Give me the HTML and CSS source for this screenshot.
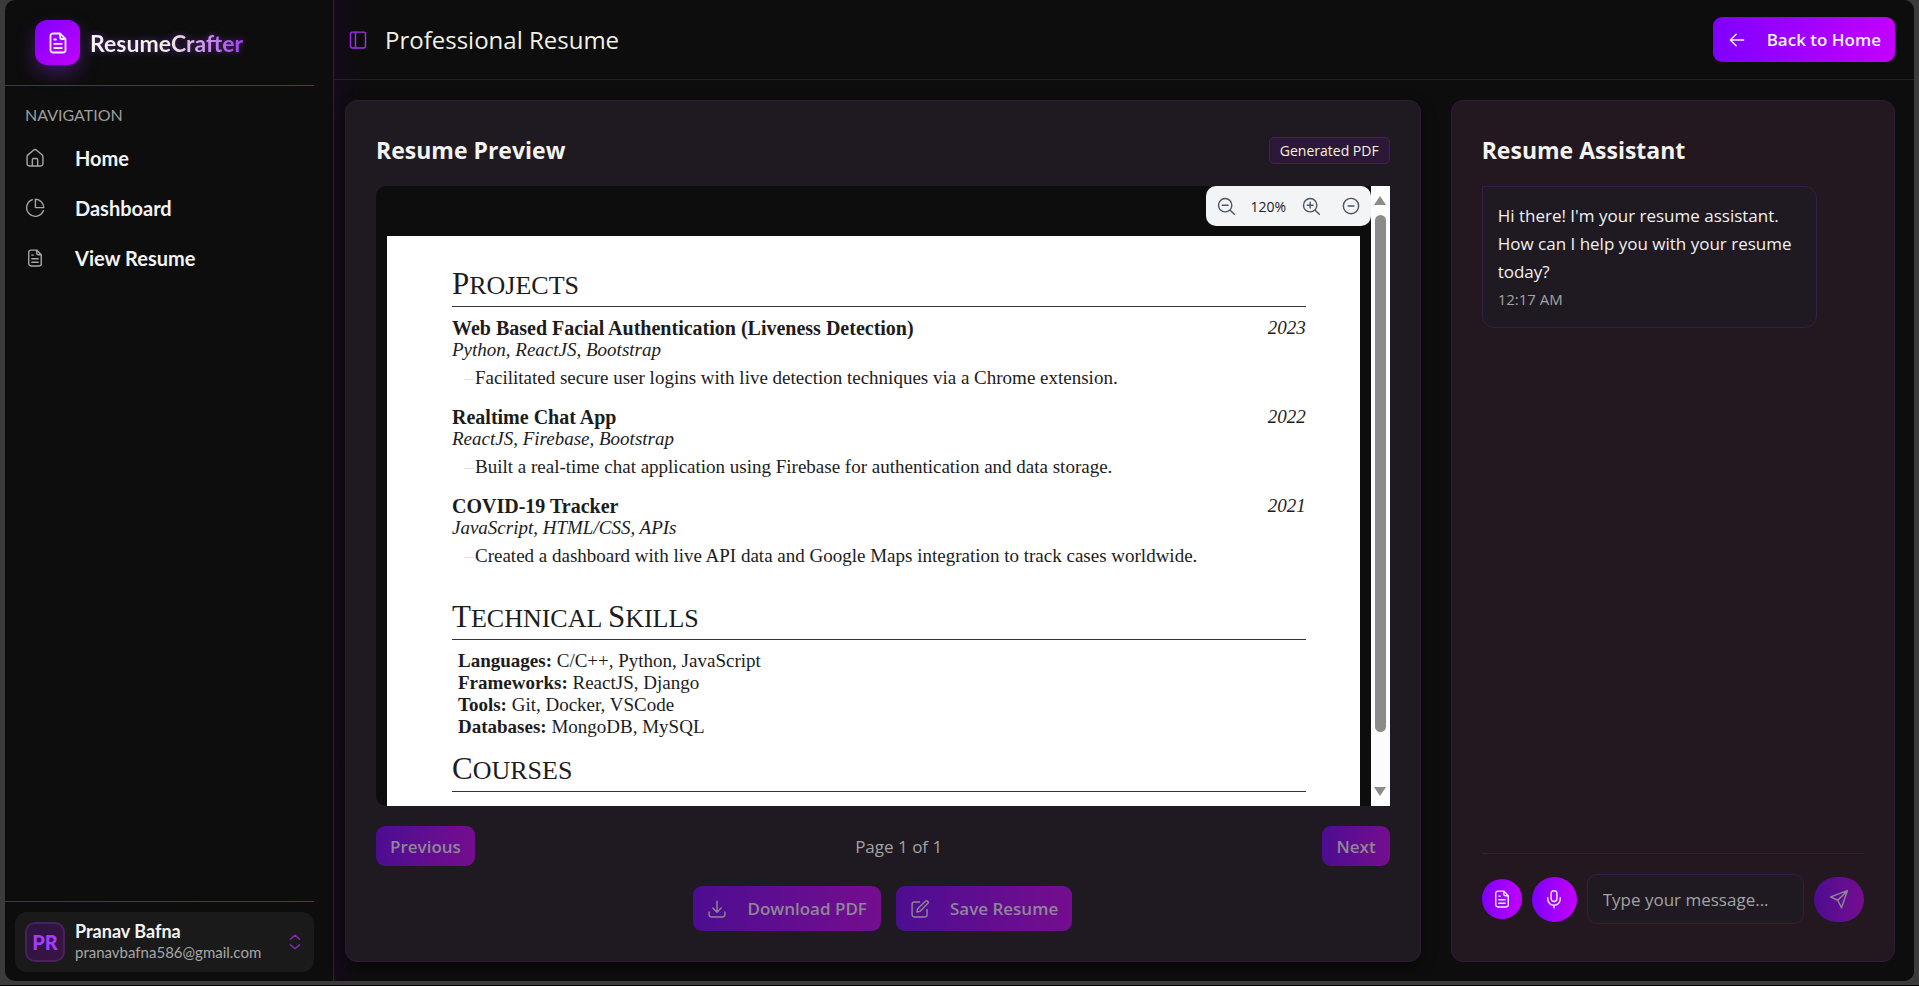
FILE: index.html
```html
<!DOCTYPE html>
<html lang="en">
<head>
<meta charset="utf-8">
<meta name="viewport" content="width=device-width, initial-scale=1">
<title>ResumeCrafter</title>
<link rel="stylesheet" href="styles.css">
</head>
<body>
<svg width="0" height="0" class="sprite" aria-hidden="true">
  <symbol id="i-file" viewBox="0 0 24 24"><path d="M14 2.500H7a2.500 2.500 0 0 0-2.500 2.500v14A2.500 2.500 0 0 0 7 21.500h10a2.500 2.500 0 0 0 2.500-2.500V8z M14 2.500V6a2 2 0 0 0 2 2h3.500 M8.200 8.500h1.800 M8.200 12.800h7.600 M8.200 17h7.600"/></symbol>
  <symbol id="i-home" viewBox="0 0 24 24"><path d="M2.500 10.500a3 3 0 0 1 1.100-2.300l6.500-5.500a3 3 0 0 1 3.800 0l6.500 5.500a3 3 0 0 1 1.100 2.300V19a2.500 2.500 0 0 1-2.500 2.500H5A2.500 2.500 0 0 1 2.500 19z M8.800 21.500V14a1.500 1.500 0 0 1 1.500-1.500h3.400a1.500 1.500 0 0 1 1.500 1.500v7.500"/></symbol>
  <symbol id="i-pie" viewBox="0 0 24 24"><path d="M8.800 2a10.300 10.300 0 1 0 13.200 13.200 M12.500 1.500v10h10a10 10 0 0 0-10-10z"/></symbol>
  <symbol id="i-panel" viewBox="0 0 24 24"><rect x="3" y="2.500" width="18" height="19" rx="2"/><path d="M9 2.500v19"/></symbol>
  <symbol id="i-back" viewBox="0 0 24 24"><path d="M20 12H4.500M11 5l-7 7 7 7"/></symbol>
  <symbol id="i-updown" viewBox="0 0 24 24"><path d="M5 8l7-6 7 6M5 16l7 6 7-6"/></symbol>
  <symbol id="i-zoomout" viewBox="0 0 24 24"><circle cx="11" cy="11" r="8"/><path d="M17 17l5 5M7.500 11h7"/></symbol>
  <symbol id="i-zoomin" viewBox="0 0 24 24"><circle cx="11" cy="11" r="8"/><path d="M17 17l5 5M7.500 11h7M11 7.500v7"/></symbol>
  <symbol id="i-minus" viewBox="0 0 24 24"><circle cx="12" cy="12" r="9.200"/><path d="M8.500 12h7"/></symbol>
  <symbol id="i-download" viewBox="0 0 24 24"><path d="M12 2.500v13M7 10.800l5 5 5-5M2.500 15.500v3.500a2.500 2.500 0 0 0 2.500 2.500h14a2.500 2.500 0 0 0 2.500-2.500v-3.500"/></symbol>
  <symbol id="i-edit" viewBox="0 0 24 24"><path d="M11.500 3.500H5A2.500 2.500 0 0 0 2.500 6v13A2.500 2.500 0 0 0 5 21.500h13a2.500 2.500 0 0 0 2.500-2.500v-6.500M8.300 15.700l.9-4 9.300-9a1.900 1.900 0 0 1 2.800 2.800l-9.200 9.300z"/></symbol>
  <symbol id="i-mic" viewBox="0 0 24 24"><rect x="8.500" y="2" width="7" height="13" rx="3.500"/><path d="M4.500 10.500v1.500a7.500 7.500 0 0 0 15 0v-1.500M12 19.500v3"/></symbol>
  <symbol id="i-send" viewBox="0 0 24 24"><path d="M22 2L2 9.500l8.500 4L15 22.500zM22 2L10.500 13.500"/></symbol>
</svg>
<div class="window">
  <aside class="sidebar">
    <div class="brand">
      <span class="brand-mark"><svg class="icon"><use href="#i-file"/></svg></span>
      <span class="brand-name">ResumeCrafter</span>
    </div>
    <nav class="nav" aria-labelledby="nav-title">
      <div class="nav-title" id="nav-title">NAVIGATION</div>
      <a class="nav-link" href="#home"><svg class="icon"><use href="#i-home"/></svg>Home</a>
      <a class="nav-link" href="#dashboard"><svg class="icon"><use href="#i-pie"/></svg>Dashboard</a>
      <a class="nav-link" href="#resume"><svg class="icon"><use href="#i-file"/></svg>View Resume</a>
    </nav>
    <div class="account">
      <button class="user" type="button">
        <span class="avatar">PR</span>
        <span class="user-text"><span class="user-name">Pranav Bafna</span><span class="user-mail">pranavbafna586@gmail.com</span></span>
        <svg class="icon user-toggle"><use href="#i-updown"/></svg>
      </button>
    </div>
  </aside>
  <div class="main">
    <header class="topbar">
      <button class="panel-toggle" type="button" aria-label="Toggle sidebar"><svg class="icon"><use href="#i-panel"/></svg></button>
      <h1 class="page-title">Professional Resume</h1>
      <button class="btn btn-wide" type="button"><svg class="icon"><use href="#i-back"/></svg>Back to Home</button>
    </header>
    <main class="content">
      <section class="card card-preview">
        <div class="card-head"><h2 class="card-title">Resume Preview</h2><span class="badge">Generated PDF</span></div>
        <div class="viewer">
          <div class="viewport">
            <article class="sheet">
              <h3 class="sheet-heading"><span class="cap">P</span>ROJECTS</h3>
              <div class="project">
                <div class="project-row"><strong>Web Based Facial Authentication (Liveness Detection)</strong><em>2023</em></div>
                <em>Python, ReactJS, Bootstrap</em>
                <p class="point"><span class="dash">–</span>Facilitated secure user logins with live detection techniques via a Chrome extension.</p>
              </div>
              <div class="project">
                <div class="project-row"><strong>Realtime Chat App</strong><em>2022</em></div>
                <em>ReactJS, Firebase, Bootstrap</em>
                <p class="point"><span class="dash">–</span>Built a real-time chat application using Firebase for authentication and data storage.</p>
              </div>
              <div class="project">
                <div class="project-row"><strong>COVID-19 Tracker</strong><em>2021</em></div>
                <em>JavaScript, HTML/CSS, APIs</em>
                <p class="point"><span class="dash">–</span>Created a dashboard with live API data and Google Maps integration to track cases worldwide.</p>
              </div>
              <h3 class="sheet-heading heading-skills"><span class="cap">T</span>ECHNICAL <span class="cap">S</span>KILLS</h3>
              <ul class="skills">
                <li><strong>Languages:</strong> C/C++, Python, JavaScript</li>
                <li><strong>Frameworks:</strong> ReactJS, Django</li>
                <li><strong>Tools:</strong> Git, Docker, VSCode</li>
                <li><strong>Databases:</strong> MongoDB, MySQL</li>
              </ul>
              <h3 class="sheet-heading"><span class="cap">C</span>OURSES</h3>
            </article>
          </div>
          <div class="scrollbar" aria-hidden="true"><span class="arrow-up"></span><span class="track"><span class="thumb"></span></span><span class="arrow-down"></span></div>
          <div class="zoom-bar">
            <button type="button" class="zoom-btn" aria-label="Zoom out"><svg class="icon"><use href="#i-zoomout"/></svg></button>
            <span class="zoom-value">120%</span>
            <button type="button" class="zoom-btn" aria-label="Zoom in"><svg class="icon"><use href="#i-zoomin"/></svg></button>
            <button type="button" class="zoom-btn zoom-reset" aria-label="Reset zoom"><svg class="icon"><use href="#i-minus"/></svg></button>
          </div>
        </div>
        <div class="pager">
          <button class="btn" type="button" disabled>Previous</button>
          <span class="page-count">Page 1 of 1</span>
          <button class="btn" type="button" disabled>Next</button>
        </div>
        <div class="actions">
          <button class="btn btn-wide" type="button" disabled><svg class="icon"><use href="#i-download"/></svg>Download PDF</button>
          <button class="btn btn-wide" type="button" disabled><svg class="icon"><use href="#i-edit"/></svg>Save Resume</button>
        </div>
      </section>
      <section class="card card-chat">
        <div class="card-head"><h2 class="card-title">Resume Assistant</h2></div>
        <div class="messages">
          <div class="bubble"><p>Hi there! I'm your resume assistant. How can I help you with your resume today?</p><time>12:17 AM</time></div>
        </div>
        <form class="composer">
          <button class="round round-small" type="button" aria-label="Attach resume"><svg class="icon"><use href="#i-file"/></svg></button>
          <button class="round" type="button" aria-label="Record"><svg class="icon"><use href="#i-mic"/></svg></button>
          <input class="message-input" type="text" placeholder="Type your message..." aria-label="Message">
          <button class="round round-send" type="submit" disabled aria-label="Send"><svg class="icon"><use href="#i-send"/></svg></button>
        </form>
      </section>
    </main>
  </div>
</div>
</body>
</html>
```
FILE: styles.css
```css
* { box-sizing: border-box; }
body {
  margin: 0;
  min-height: 100vh;
  display: flex;
  padding: 0 5px 4px;
  background: #3b3b3b;
  border-bottom: 1px solid #000;
  font-family: "Open Sans", "Noto Sans", sans-serif;
  font-size: 16px;
  color: #f1f1f1;
}
h1, h2, h3, p, ul { margin: 0; padding: 0; }
button, input { font: inherit; color: inherit; border: 0; margin: 0; }
.sprite { position: absolute; }
.icon {
  width: 20px;
  height: 20px;
  flex: none;
  fill: none;
  stroke: currentColor;
  stroke-width: 1.7;
  stroke-linecap: round;
  stroke-linejoin: round;
}
.window {
  flex: 1;
  display: grid;
  grid-template-columns: 329px minmax(0, 1fr);
  background: #0d0d0d;
  border-radius: 10px;
  overflow: hidden;
}

.sidebar {
  display: flex;
  flex-direction: column;
  padding-right: 19px;
  border-right: 1px solid #3c1552;
  font-family: Lato, sans-serif;
}
.brand {
  display: flex;
  align-items: center;
  gap: 10px;
  padding: 20px 30px;
  height: 86px;
  border-bottom: 1px solid;
  border-image: linear-gradient(90deg, #7600d2, #9400c0) 1;
}
.brand-mark {
  display: grid;
  place-items: center;
  width: 45px;
  height: 45px;
  border-radius: 12px;
  background: linear-gradient(135deg, #7f00ff, #c300ff);
  box-shadow: 0 8px 18px rgba(160, 40, 255, .35);
}
.brand-mark .icon { width: 24px; height: 24px; stroke-width: 1.8; }
.brand-name {
  font-size: 23px;
  font-weight: 700;
  background: linear-gradient(90deg, #f3f3f3, #f3f3df 50%, #a43cf2);
  -webkit-background-clip: text;
  background-clip: text;
  color: transparent;
  filter: drop-shadow(0 0 3px rgba(160, 60, 255, .5));
}
.nav { flex: 1; padding: 9px 20px; }
.nav-title {
  font-size: 16px;
  line-height: 40px;
  color: #9e9e9e;
}
.nav-link {
  display: flex;
  align-items: center;
  gap: 30px;
  height: 50px;
  font-size: 20px;
  font-weight: 700;
  color: #f3f3f3;
  text-decoration: none;
}
.nav-title + .nav-link { margin-top: -2px; }
.nav-link .icon { color: #a6a6a6; }
.account {
  padding: 10px 0 9px 10px;
  border-top: 1px solid;
  border-image: linear-gradient(90deg, #7600d2, #9400c0) 1;
}
.user {
  display: flex;
  align-items: center;
  gap: 10px;
  width: 100%;
  height: 60px;
  padding: 10px;
  border-radius: 12px;
  background: #1a1a1a;
  text-align: left;
}
.avatar {
  display: grid;
  place-items: center;
  width: 40px;
  height: 40px;
  border: 2px solid #49215c;
  border-radius: 10px;
  background: linear-gradient(135deg, #2b1444, #3a1440);
  color: #a43cff;
  font-size: 20px;
  font-weight: 900;
}
.user-text { flex: 1; min-width: 0; line-height: 21px; }
.user-name, .user-mail { display: block; }
.user-name { font-size: 18px; font-weight: 700; color: #f3f3f3; }
.user-mail { font-size: 15px; color: #a6a6a6; }
.user-toggle { width: 18px; height: 16px; color: #8a2bc8; stroke-width: 2; }

.main {
  display: flex;
  flex-direction: column;
  min-width: 0;
  background: linear-gradient(90deg, #140a1b, #0d0d0d 26px);
}
.topbar {
  display: flex;
  align-items: center;
  height: 80px;
  padding: 0 19px 0 14px;
  border-bottom: 1px solid #2e1640;
}
.panel-toggle {
  display: grid;
  place-items: center;
  padding: 0;
  background: none;
  color: #a42df0;
}
.page-title {
  flex: 1;
  margin-left: 17px;
  font-size: 24px;
  font-weight: 400;
  color: #f1f1e6;
}
.btn {
  display: inline-flex;
  align-items: center;
  justify-content: center;
  height: 40px;
  padding: 0 14px;
  border-radius: 9px;
  background: linear-gradient(90deg, #7f00ff, #c300ff);
  color: #f1f1f1;
  font-size: 17px;
  font-weight: 600;
}
.btn-wide { height: 45px; gap: 20px; }
.btn:disabled, .round:disabled {
  background: linear-gradient(90deg, #4d0d91, #750d8f);
  color: #8e8795;
}

.content {
  flex: 1;
  display: grid;
  grid-template-columns: minmax(0, 46fr) minmax(0, 19fr);
  gap: 30px;
  padding: 20px 19px 19px 11px;
}
.card {
  display: flex;
  flex-direction: column;
  padding: 30px;
  border: 1px solid #2e1b38;
  border-radius: 12px;
}
.card-preview { background: #1f1922; box-shadow: 0 6px 16px rgba(0, 0, 0, .4); }
.card-chat { background: #23181f; }
.card-head {
  display: flex;
  align-items: center;
  justify-content: space-between;
  height: 38px;
  margin-bottom: 17px;
}
.card-title { font-size: 23px; line-height: 38px; font-weight: 700; color: #f3f3ef; }
.badge {
  padding: 0 10px;
  border: 1px solid #43205a;
  border-radius: 5px;
  background: #2c1836;
  font-size: 14px;
  line-height: 25px;
  color: #f3f3df;
}

.viewer {
  position: relative;
  flex: 1;
  display: flex;
  min-height: 0;
  border-radius: 10px 0 0 10px;
  background: #0d0d0d;
  overflow: hidden;
}
.viewport { flex: 1; padding: 50px 11px 0; display: flex; min-width: 0; }
.sheet {
  flex: 1;
  padding: 33px 54px 0 65px;
  background: #fff;
  color: #1c1c1c;
  font-family: "Liberation Serif", serif;
  font-size: 19px;
  line-height: 22px;
}
.sheet-heading {
  padding-bottom: 3px;
  margin-bottom: 10px;
  border-bottom: 1px solid #333;
  font-size: 26px;
  line-height: 34px;
  font-weight: 400;
}
.cap { font-size: 31px; line-height: 30px; }
.project { margin-bottom: 17px; }
.project-row { display: flex; justify-content: space-between; }
.project-row strong { font-size: 20px; }
.point { display: flex; margin-top: 6px; }
.dash { width: 23px; padding-right: 1px; text-align: right; color: #e0e0e0; }
.heading-skills { margin-top: 35px; }
.skills { list-style: none; padding-left: 6px; margin-bottom: 16px; }
.scrollbar {
  flex: none;
  width: 19px;
  display: flex;
  flex-direction: column;
  align-items: center;
  padding: 10px 0;
  background: #fcfcfc;
}
.arrow-up, .arrow-down { border: 6px solid transparent; }
.arrow-up { border-top: 0; border-bottom: 9px solid #8b8b8b; }
.arrow-down { border-bottom: 0; border-top: 9px solid #8b8b8b; }
.track { flex: 1; width: 11px; padding: 10px 0; }
.thumb { display: block; height: 92%; border-radius: 6px; background: #8b8b8b; }
.zoom-bar {
  position: absolute;
  top: 0;
  right: 19px;
  display: flex;
  align-items: center;
  height: 40px;
  padding: 0 10px;
  border-radius: 10px;
  background: #f3f4f6;
  color: #222;
  font-size: 14px;
}
.zoom-btn { display: grid; padding: 0; background: none; color: #4b5563; }
.zoom-value { width: 65px; text-align: center; }
.zoom-reset { margin-left: 20px; }

.pager {
  display: flex;
  align-items: center;
  justify-content: space-between;
  margin-top: 20px;
}
.page-count { font-size: 17px; color: #a3a3a3; }
.actions { display: flex; justify-content: center; gap: 15px; margin-top: 20px; }

.messages { flex: 1; }
.bubble {
  max-width: 335px;
  padding: 15px;
  border: 1px solid #371d49;
  border-radius: 0 12px 12px 12px;
  background: #1f1922;
  font-size: 17px;
  line-height: 28px;
}
.bubble time { display: block; font-size: 15px; line-height: 26px; color: #a3a3a3; }
.composer {
  display: flex;
  align-items: center;
  gap: 10px;
  padding: 20px 0 7px;
  border-top: 1px solid #331d37;
}
.round {
  display: grid;
  place-items: center;
  flex: none;
  width: 45px;
  height: 45px;
  padding: 0;
  border-radius: 23px;
  background: linear-gradient(90deg, #7f00ff, #c300ff);
}
.round-small { width: 40px; height: 40px; }
.round-send { width: 50px; }
.message-input {
  flex: 1;
  min-width: 0;
  height: 50px;
  padding: 0 15px;
  border: 1px solid #371d49;
  border-radius: 10px;
  background: #1f1922;
  font-size: 17px;
}
.message-input::placeholder { color: #a3a3a3; opacity: 1; }
```
